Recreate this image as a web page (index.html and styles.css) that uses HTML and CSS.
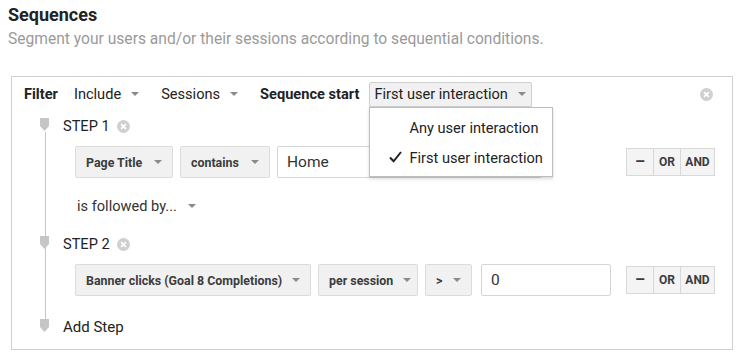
FILE: index.html
```html
<!DOCTYPE html>
<html lang="en">
<head>
    <meta charset="UTF-8">
    <title>Sequences</title>
    <link rel="stylesheet" href="styles.css">
</head>
<body>
    <div class="page">
        <h1 class="title">Sequences</h1>
        <p class="subtitle">Segment your users and/or their sessions according to sequential conditions.</p>

        <div class="box">
            <div class="filter-row">
                <span class="label">Filter</span>
                <span class="plain">Include <i class="caret"></i></span>
                <span class="plain">Sessions <i class="caret"></i></span>
                <span class="label">Sequence start</span>
                <div class="picker">
                    <button class="picker-btn">First user interaction <i class="caret"></i></button>
                    <div class="menu">
                        <div class="menu-item">Any user interaction</div>
                        <div class="menu-item">
                            <svg class="check" width="13" height="12" viewBox="0 0 13 12"><path d="M1 6.5l3.6 3.8L12 1" fill="none" stroke="#222" stroke-width="2"/></svg>
                            First user interaction
                        </div>
                    </div>
                </div>
                <svg class="remove remove-filter" width="13" height="13" viewBox="0 0 12 12">
                    <circle cx="6" cy="6" r="6" fill="#d0d0d0"/>
                    <path d="M3.8 3.8l4.4 4.4M8.2 3.8l-4.4 4.4" stroke="#fff" stroke-width="1.6"/>
                </svg>
            </div>

            <div class="steps">
                <div class="step-head">
                    <svg class="marker" width="9" height="13" viewBox="0 0 9 13"><path d="M0 0h9v8l-4.5 5L0 8z" fill="#c6c6c6"/></svg>
                    <span>STEP 1</span>
                    <svg class="remove" width="13" height="13" viewBox="0 0 12 12">
                        <circle cx="6" cy="6" r="6" fill="#d0d0d0"/>
                        <path d="M3.8 3.8l4.4 4.4M8.2 3.8l-4.4 4.4" stroke="#fff" stroke-width="1.6"/>
                    </svg>
                </div>
                <div class="cond-row">
                    <button class="sel w-page">Page Title <i class="caret"></i></button>
                    <button class="sel w-contains">contains <i class="caret"></i></button>
                    <input class="field w-home" type="text" value="Home">
                    <div class="ops">
                        <button class="minus">&ndash;</button><button>OR</button><button>AND</button>
                    </div>
                </div>

                <div class="followed">is followed by... <i class="caret"></i></div>

                <div class="step-head">
                    <svg class="marker" width="9" height="13" viewBox="0 0 9 13"><path d="M0 0h9v8l-4.5 5L0 8z" fill="#c6c6c6"/></svg>
                    <span>STEP 2</span>
                    <svg class="remove" width="13" height="13" viewBox="0 0 12 12">
                        <circle cx="6" cy="6" r="6" fill="#d0d0d0"/>
                        <path d="M3.8 3.8l4.4 4.4M8.2 3.8l-4.4 4.4" stroke="#fff" stroke-width="1.6"/>
                    </svg>
                </div>
                <div class="cond-row">
                    <button class="sel w-banner">Banner clicks (Goal 8 Completions) <i class="caret"></i></button>
                    <button class="sel w-per">per session <i class="caret"></i></button>
                    <button class="sel w-gt">&gt; <i class="caret"></i></button>
                    <input class="field w-zero" type="text" value="0">
                    <div class="ops">
                        <button class="minus">&ndash;</button><button>OR</button><button>AND</button>
                    </div>
                </div>

                <div class="step-head add-step">
                    <svg class="marker" width="9" height="13" viewBox="0 0 9 13"><path d="M0 0h9v8l-4.5 5L0 8z" fill="#c6c6c6"/></svg>
                    <span>Add Step</span>
                </div>
            </div>
        </div>
    </div>
</body>
</html>
```

FILE: styles.css
```css
body {
    margin: 0;
    font-family: Roboto, "Liberation Sans", sans-serif;
    color: #222;
    background: #fff;
}

.page {
    padding: 5px 7px 0 8px;
}

.title {
    margin: 0;
    font-size: 18px;
    line-height: 20px;
    font-weight: bold;
    color: #222;
}

.subtitle {
    margin: 4px 0 0;
    font-size: 15.6px;
    line-height: 20px;
    color: #9a9a9a;
}

.box {
    margin: 27px 0 0 3px;
    width: 720px;
    border: 1px solid #cfcfcf;
    padding: 5px 0 12px 0;
}

/* filter row */
.filter-row {
    display: flex;
    align-items: center;
    height: 24px;
    padding-left: 12px;
    font-size: 14.6px;
}

.label {
    font-weight: bold;
    margin-right: 16px;
}

.plain {
    margin-right: 22px;
    display: inline-flex;
    align-items: center;
}

.caret {
    display: inline-block;
    width: 0;
    height: 0;
    margin-left: 10px;
    border-left: 4px solid transparent;
    border-right: 4px solid transparent;
    border-top: 4px solid #8a8a8a;
}

.picker {
    position: relative;
    margin-left: -6px;
}

.picker-btn {
    display: flex;
    align-items: center;
    width: 163px;
    height: 25px;
    padding: 0 0 0 4px;
    font-family: inherit;
    font-size: 14.6px;
    white-space: nowrap;
    color: #222;
    background: #f1f1f1;
    border: 1px solid #cfcfcf;
    border-radius: 2px;
    box-shadow: 0 1px 1px rgba(0,0,0,0.1);
}

.picker-btn .caret {
    margin-left: 10px;
}

.menu {
    position: absolute;
    top: 25px;
    left: 0;
    width: 184px;
    height: 70px;
    background: #fff;
    border: 1px solid #bdbdbd;
    box-shadow: 0 2px 3px rgba(0,0,0,0.15);
    z-index: 5;
    padding-top: 5px;
    box-sizing: border-box;
}

.menu-item {
    position: relative;
    height: 30px;
    line-height: 30px;
    padding-left: 39px;
    font-size: 14.6px;
    white-space: nowrap;
    color: #222;
}

.check {
    position: absolute;
    left: 19px;
    top: 8px;
}

.remove-filter {
    margin-left: auto;
    margin-right: 19px;
}

/* steps */
.steps {
    position: relative;
    padding-left: 28px;
}

.steps::before {
    content: "";
    position: absolute;
    left: 33px;
    top: 16px;
    bottom: 16px;
    width: 1px;
    background: #c6c6c6;
}

.step-head {
    display: flex;
    align-items: center;
    height: 20px;
    margin-top: 10px;
    font-size: 14.6px;
}

.followed + .step-head {
    margin-top: 18px;
}

.marker {
    position: relative;
    margin-right: 14px;
    margin-top: -3px;
}

.step-head .remove {
    margin-left: 7px;
}

.step-head.add-step {
    margin-top: 21px;
    font-size: 15px;
}

.cond-row {
    display: flex;
    align-items: center;
    height: 32px;
    margin-top: 10px;
    padding-left: 35px;
    padding-right: 17px;
}

.sel {
    display: flex;
    align-items: center;
    justify-content: space-between;
    height: 32px;
    margin-right: 7px;
    padding: 0 10px 0 10px;
    font-family: inherit;
    font-size: 12.4px;
    font-weight: bold;
    white-space: nowrap;
    color: #3c3c3c;
    background: #f1f1f1;
    border: 1px solid #dcdcdc;
    border-radius: 2px;
}

.w-page { width: 98px; }
.w-contains { width: 90px; }
.w-banner { width: 236px; }
.w-per { width: 100px; }
.w-gt { width: 47px; margin-right: 9px; }

.field {
    height: 32px;
    box-sizing: border-box;
    padding: 0 9px;
    font-family: inherit;
    font-size: 15.5px;
    color: #333;
    border: 1px solid #d4d4d4;
    border-radius: 2px;
    background: #fff;
}

.w-home { width: 265px; }
.w-zero { width: 130px; }

.ops {
    display: flex;
    margin-left: auto;
}

.ops button {
    height: 28px;
    padding: 0;
    font-family: inherit;
    font-size: 12px;
    font-weight: bold;
    color: #3c3c3c;
    background: #f4f4f4;
    border: 1px solid #d8d8d8;
    border-left: none;
}

.ops .minus {
    width: 28px;
    border-left: 1px solid #d8d8d8;
    font-size: 16px;
    line-height: 1;
}

.ops button:nth-child(2) { width: 27px; }
.ops button:nth-child(3) { width: 34px; }

.followed {
    display: flex;
    align-items: center;
    height: 20px;
    margin-top: 18px;
    padding-left: 37px;
    font-size: 14.6px;
    color: #333;
}

.followed .caret {
    margin-left: 11px;
}
```
